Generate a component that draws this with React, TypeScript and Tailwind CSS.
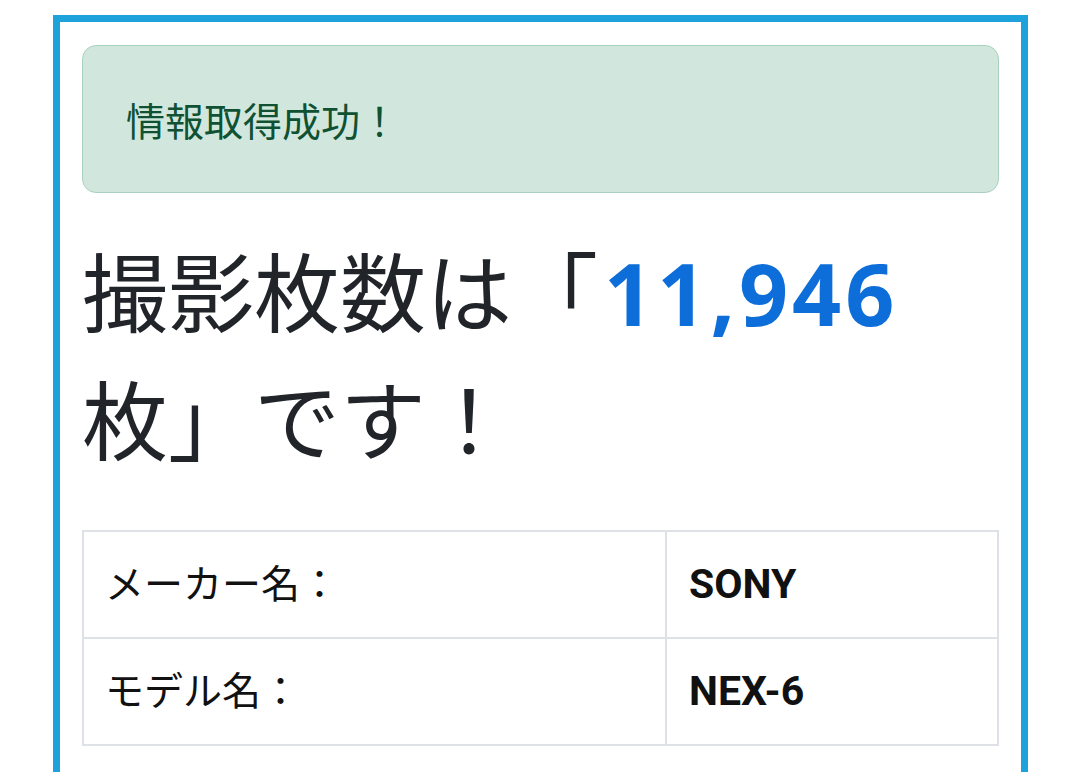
import React from 'react';

const rows = [
  { label: 'メーカー名：', value: 'SONY' },
  { label: 'モデル名：', value: 'NEX-6' },
];

export default function App() {
  return (
    <div className="min-h-[772px] bg-white pt-[15px] pl-[53px] w-[1080px] overflow-hidden" style={{ fontFamily: '"Noto Sans CJK JP", "Noto Sans", sans-serif' }}>
      <div className="w-[975px] h-[800px] border-[7px] border-b-0 border-[#1ea2dc] px-[22px] pt-[23px]">
        {/* alert */}
        <div className="h-[148px] rounded-[14px] border border-[#a8d2bf] bg-[#d1e7dd] pl-[43px] flex items-center">
          <span className="text-[39px] text-[#0f5132] leading-none">情報取得成功！</span>
        </div>

        {/* heading */}
        <h1 className="mt-[34px] text-[86px] leading-[124px] text-[#212529] font-normal">
          撮影枚数は「<span className="font-bold text-[#0d6dd9] tracking-[4px] ml-[6px]" style={{ fontFamily: '"Noto Sans", sans-serif' }}>11,946</span>
          <br />
          枚」です！
        </h1>

        {/* table */}
        <table className="mt-[51px] w-[917px] border-collapse">
          <tbody>
            {rows.map(r => (
              <tr key={r.label} className="h-[107px]">
                <td className="w-[583px] border-2 border-[#dee2e6] pl-[21px] pb-[6px] text-[39px] text-[#111]">{r.label}</td>
                <td className="border-2 border-[#dee2e6] pl-[22px] text-[41px] font-bold text-[#111]" style={{ fontFamily: 'Roboto, sans-serif' }}>{r.value}</td>
              </tr>
            ))}
          </tbody>
        </table>
      </div>
    </div>
  );
}
